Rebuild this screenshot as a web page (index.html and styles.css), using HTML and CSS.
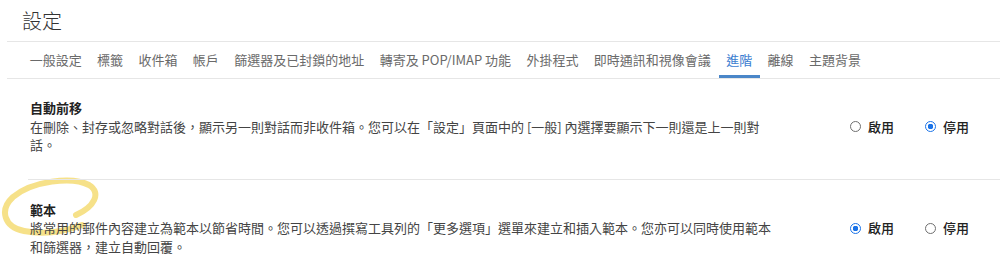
FILE: index.html
```html
<!DOCTYPE html>
<html lang="zh-Hant">
<head>
<meta charset="utf-8">
<title>設定</title>
<link rel="stylesheet" href="styles.css">
</head>
<body>
<svg class="mark" width="1000" height="276" viewBox="0 0 1000 276">
  <path d="M76 215 C94 207 102 193 89 185 C72 176 32 181 13 197 C-1 210 4 227 24 231 C44 235 66 231 82 225" />
</svg>
<div class="page">
  <h1 class="title">設定</h1>
  <nav class="tabs">
    <span class="tab">一般設定</span>
    <span class="tab">標籤</span>
    <span class="tab">收件箱</span>
    <span class="tab">帳戶</span>
    <span class="tab">篩選器及已封鎖的地址</span>
    <span class="tab">轉寄及 POP/IMAP 功能</span>
    <span class="tab">外掛程式</span>
    <span class="tab">即時通訊和視像會議</span>
    <span class="tab active">進階</span>
    <span class="tab">離線</span>
    <span class="tab">主題背景</span>
  </nav>
  <section class="setting">
    <div class="info">
      <div class="name">自動前移</div>
      <div class="desc">在刪除、封存或忽略對話後，顯示另一則對話而非收件箱。您可以在「設定」頁面中的 [一般] 內選擇要顯示下一則還是上一則對<br>話。</div>
    </div>
    <div class="options">
      <label class="opt"><span class="radio"></span>啟用</label>
      <label class="opt"><span class="radio on"></span>停用</label>
    </div>
  </section>
  <section class="setting">
    <div class="info">
      <div class="name">範本</div>
      <div class="desc">將常用的郵件內容建立為範本以節省時間。您可以透過撰寫工具列的「更多選項」選單來建立和插入範本。您亦可以同時使用範本<br>和篩選器，建立自動回覆。</div>
    </div>
    <div class="options">
      <label class="opt"><span class="radio on"></span>啟用</label>
      <label class="opt"><span class="radio"></span>停用</label>
    </div>
  </section>
</div>
</body>
</html>
```

FILE: styles.css
```css
html, body {
  margin: 0;
  padding: 0;
  background: #ffffff;
}

body {
  font-family: "Noto Sans CJK TC", "Noto Sans", sans-serif;
  position: relative;
  width: 1000px;
  height: 276px;
  overflow: hidden;
}

.page {
  position: relative;
  z-index: 1;
  padding-left: 7px;
}

.title {
  margin: 0;
  height: 41px;
  line-height: 41px;
  padding-left: 15px;
  font-size: 20px;
  font-weight: 300;
  color: #333333;
  border-bottom: 1px solid #e6e6e6;
}

.tabs {
  display: flex;
  height: 36px;
  padding-left: 15px;
  border-bottom: 1px solid #e6e6e6;
}

.tab {
  padding: 0 7.7px;
  line-height: 36px;
  font-size: 13px;
  color: #6a6a6a;
  white-space: nowrap;
}

.tab.active {
  color: #3b7dd0;
  box-shadow: inset 0 -3px 0 #4a86c8;
}

.setting {
  margin-left: 21px;
  display: flex;
  padding: 20px 0 24px 2px;
  font-size: 13px;
  line-height: 18.5px;
}

.setting + .setting {
  border-top: 1px solid #e6e6e6;
  padding-top: 21px;
}

.info {
  width: 820px;
  flex: 0 0 820px;
}

.name {
  font-weight: 700;
  color: #222222;
}

.desc {
  color: #444444;
}

.options {
  display: flex;
  gap: 31px;
  margin-top: 18.5px;
  height: 18.5px;
}

.opt {
  display: flex;
  align-items: center;
  gap: 7px;
  color: #222222;
  font-weight: 500;
}

.radio {
  width: 11px;
  height: 11px;
  box-sizing: border-box;
  border: 1px solid #6f6f6f;
  border-radius: 50%;
  background: #fff;
}

.radio.on {
  border: 1.5px solid #1a73e8;
  background: radial-gradient(circle, #1a73e8 0 2.6px, #fff 3px);
}

.mark {
  position: absolute;
  left: 0;
  top: 0;
  z-index: 0;
}

.mark path {
  fill: none;
  stroke: #f5dc74;
  stroke-opacity: 0.85;
  stroke-width: 6;
  stroke-linecap: round;
}
```
